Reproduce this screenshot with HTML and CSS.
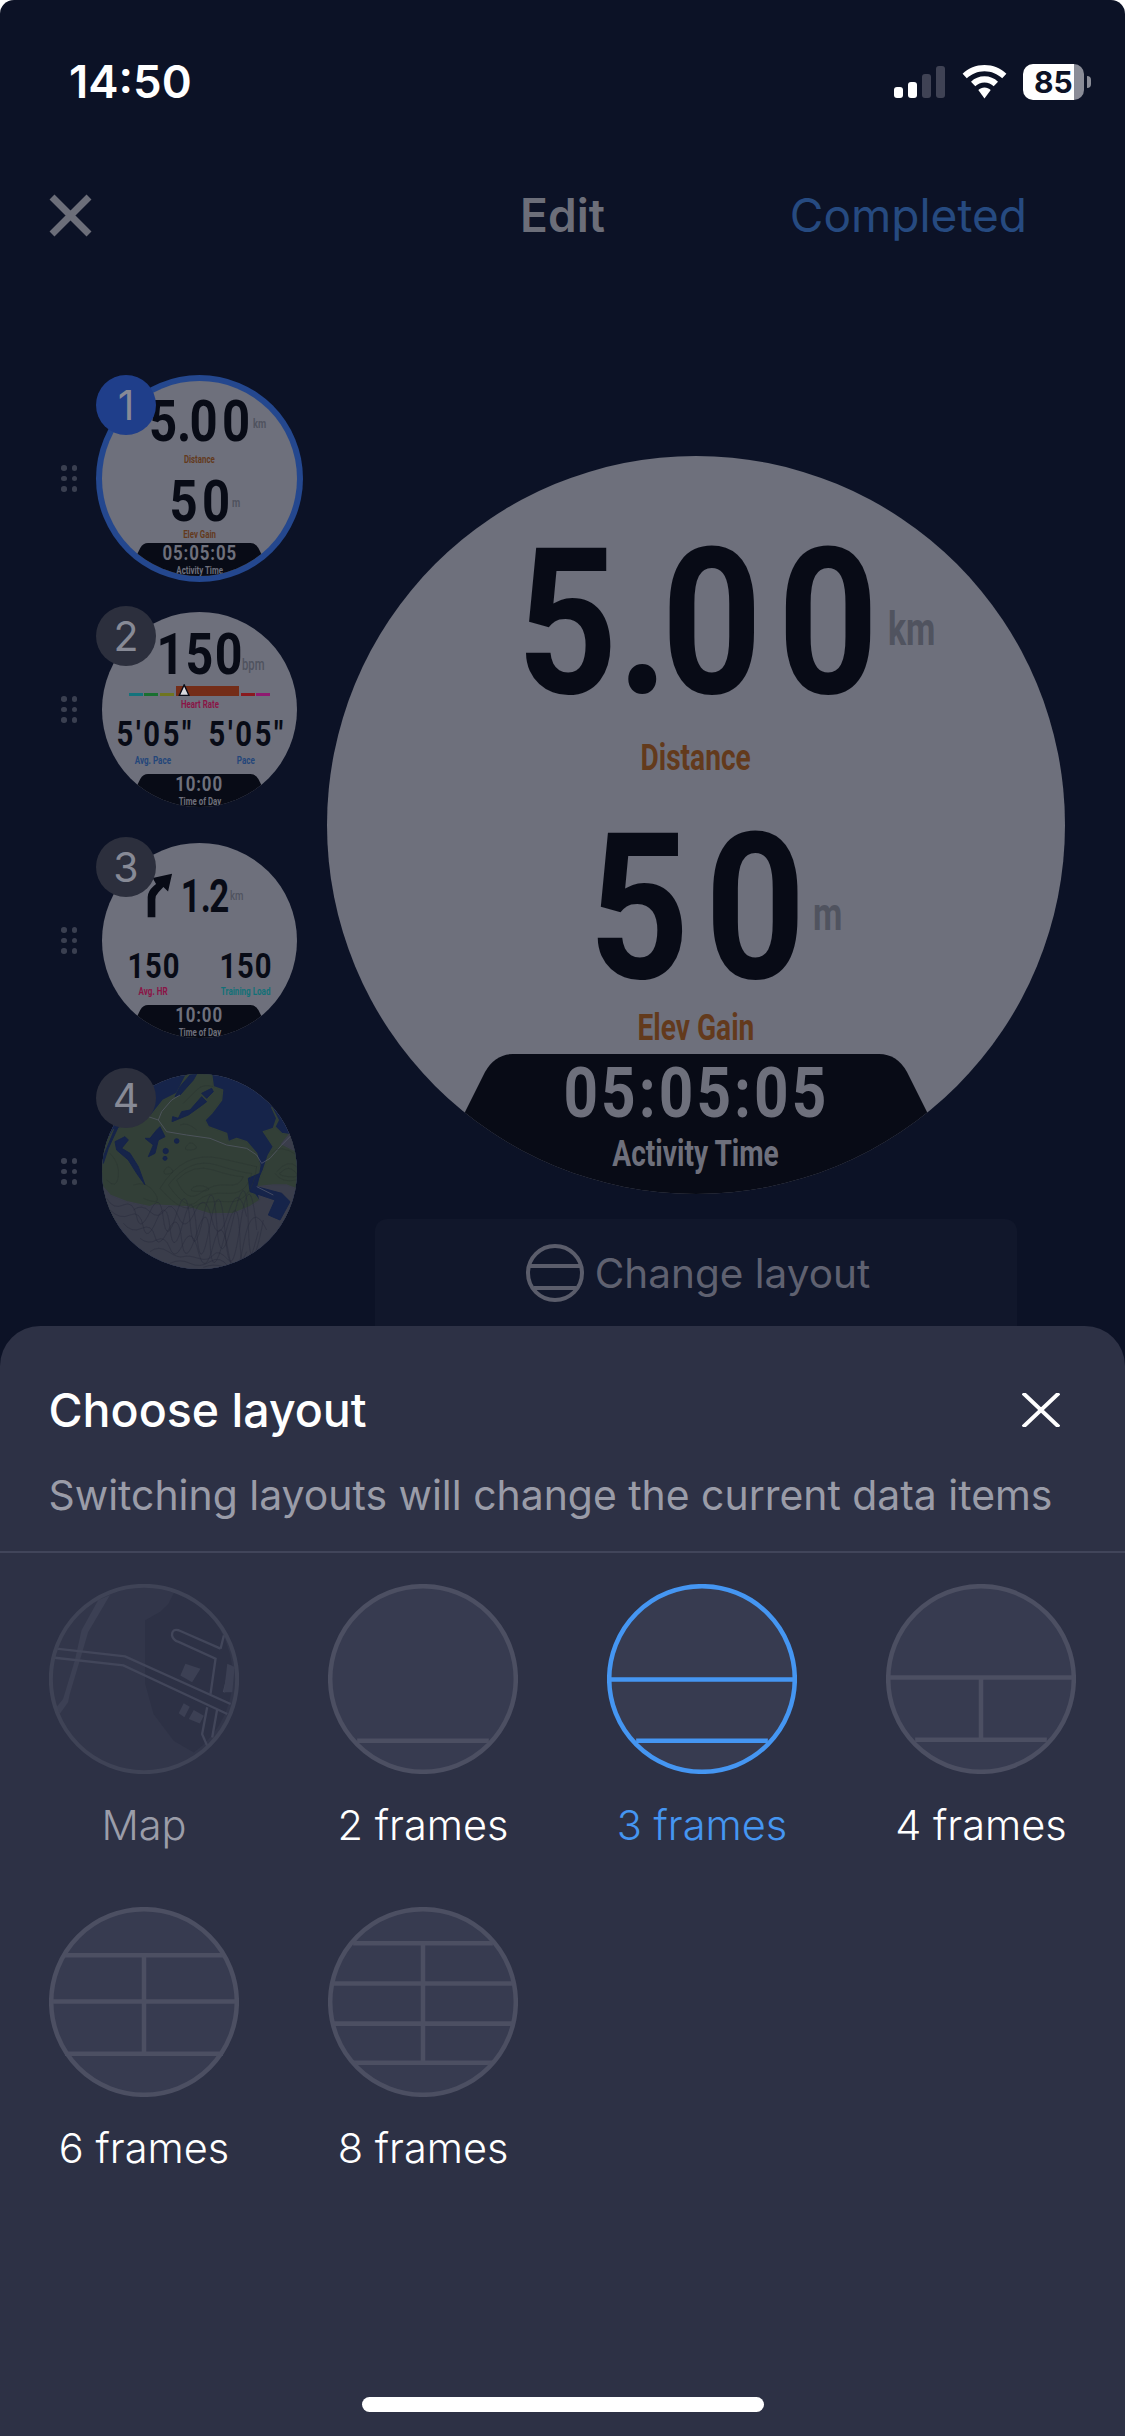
FILE: index.html
```html
<!DOCTYPE html>
<html lang="en">
<head>
<meta charset="utf-8">
<title>Edit</title>
<link rel="stylesheet" href="styles.css">
</head>
<body>
<div class="screen">
  <div class="status">
    <span class="time">14:50</span>
    <div class="status-icons">
      <div class="signal"><i class="on s1"></i><i class="on s2"></i><i class="s3"></i><i class="s4"></i></div>
      <svg class="wifi" viewBox="0 0 45 34"><path d="M22.5 0C14 0 6.400 3.300 0.600 8.700L4.800 13.300C9.400 9 15.700 6.200 22.500 6.200S35.600 9 40.200 13.300L44.400 8.700C38.600 3.300 31 0 22.500 0Z" fill="#fff"/><path d="M22.500 11.300C17.300 11.300 12.600 13.300 9 16.700L13.300 21.300C15.700 19 18.900 17.600 22.500 17.600S29.300 19 31.700 21.300L36 16.700C32.400 13.300 27.700 11.300 22.500 11.300Z" fill="#fff"/><path d="M22.500 22.600C20.100 22.600 18 23.500 16.300 25L22.500 33.500L28.700 25C27 23.500 24.900 22.600 22.500 22.600Z" fill="#fff"/></svg>
      <div class="battery"><div class="battery-body"><span>85</span></div><i class="battery-cap"></i></div>
    </div>
  </div>

  <header class="nav">
    <svg class="nav-close" viewBox="0 0 43 43"><path d="M3 3L40 40M40 3L3 40" stroke="#6c6e79" stroke-width="7" fill="none"/></svg>
    <span class="nav-title">Edit</span>
    <span class="nav-done">Completed</span>
  </header>

  <main class="editor">
    <ol class="pages">
      <li class="page">
        <div class="grip"><i></i><i></i><i></i><i></i><i></i><i></i></div>
        <div class="thumb">
          <span class="badge badge-active">1</span>
          <div class="dial dial-small dial-ring">
            <div class="face">
              <div class="value v-big w-500 mt-89"><span class="digits">5<span class="pt">.</span>00</span><span class="unit">km</span></div>
              <div class="label c-brown mt-43">Distance</div>
              <div class="value v-big w-50 mt-58"><span class="digits">50</span><span class="unit">m</span></div>
              <div class="label c-brown mt-28">Elev Gain</div>
              <div class="tab">
                <svg class="tab-shape" viewBox="0 0 738 140"><path d="M130 74L158 18Q168 0 186 0L552 0Q570 0 580 18L608 74L608 140L130 140Z"/></svg>
                <div class="tab-value">05:05:05</div>
                <div class="tab-label">Activity Time</div>
              </div>
            </div>
          </div>
        </div>
      </li>
      <li class="page">
        <div class="grip"><i></i><i></i><i></i><i></i><i></i><i></i></div>
        <div class="thumb">
          <span class="badge">2</span>
          <div class="dial dial-small">
            <div class="face">
              <div class="value v-hr w-150"><span class="digits tight">150</span><span class="unit unit-bpm">bpm</span></div>
              <div class="zones">
                <i class="z z1"></i><i class="z z2"></i><i class="z z3"></i>
                <i class="z z4"><svg class="pointer" viewBox="0 0 14 14"><path d="M7 1L12.500 13L1.500 13Z" fill="#d8d9de" stroke="#080b16" stroke-width="1.500"/></svg></i>
                <i class="z z5"></i><i class="z z6"></i>
              </div>
              <div class="label label-hr c-rose">Heart Rate</div>
              <div class="pair pair-pace">
                <div class="cell"><div class="value v-mid"><span class="digits">5'05"</span></div><div class="label label-s c-blue">Avg. Pace</div></div>
                <div class="cell"><div class="value v-mid"><span class="digits">5'05"</span></div><div class="label label-s c-blue">Pace</div></div>
              </div>
              <div class="tab">
                <svg class="tab-shape" viewBox="0 0 738 140"><path d="M130 74L158 18Q168 0 186 0L552 0Q570 0 580 18L608 74L608 140L130 140Z"/></svg>
                <div class="tab-value">10:00</div>
                <div class="tab-label">Time of Day</div>
              </div>
            </div>
          </div>
        </div>
      </li>
      <li class="page">
        <div class="grip"><i></i><i></i><i></i><i></i><i></i><i></i></div>
        <div class="thumb">
          <span class="badge">3</span>
          <div class="dial dial-small">
            <div class="face">
              <div class="nav-row">
                <svg class="turn" viewBox="325 213 77 134"><path d="M327 345L327 285Q327 268 345 252L352 246L342 228L400 215L388 268L374 255L360 270Q350 280 350 292L350 345Z" fill="#080b16"/></svg>
                <div class="value v-nav w-12"><span class="digits tight">1<span class="pt">.</span>2</span><span class="unit unit-nav">km</span></div>
              </div>
              <div class="pair pair-load">
                <div class="cell"><div class="value v-mid"><span class="digits tight">150</span></div><div class="label label-s c-rose">Avg. HR</div></div>
                <div class="cell"><div class="value v-mid"><span class="digits tight">150</span></div><div class="label label-s c-teal">Training Load</div></div>
              </div>
              <div class="tab">
                <svg class="tab-shape" viewBox="0 0 738 140"><path d="M130 74L158 18Q168 0 186 0L552 0Q570 0 580 18L608 74L608 140L130 140Z"/></svg>
                <div class="tab-value">10:00</div>
                <div class="tab-label">Time of Day</div>
              </div>
            </div>
          </div>
        </div>
      </li>
      <li class="page">
        <div class="grip"><i></i><i></i><i></i><i></i><i></i><i></i></div>
        <div class="thumb">
          <span class="badge">4</span>
          <div class="dial dial-small dial-map">
            <svg class="terrain" viewBox="6 12 585 585">
              <rect x="0" y="0" width="600" height="600" fill="#16244a"/>
              <path class="land" d="M0 450L0 250L40 180L70 170L150 140L190 90L230 70L260 12L335 12L340 50L368 60L365 90L335 130L315 150L325 170L380 190L385 215L410 205L440 215L470 250L480 285L475 315L445 340L465 375L480 395L440 450Z"/>
              <path class="land" d="M490 185L520 175L530 145L515 112L535 150L525 170L545 190L575 195L595 220L600 350L560 370L470 345L490 300L505 255L520 230Z"/>
              <path class="rock" d="M0 340L30 375L80 395L150 410L160 405L260 410L330 432L400 430L450 410L480 390L470 350L520 345L560 345L600 360L600 600L0 600Z"/>
              <path class="rock" d="M545 222L570 190L600 225L580 240Z"/>
              <path class="water" d="M445 325L480 310L470 350L545 370L570 395L540 450L505 435L525 390L450 365Z"/>
              <path class="water" d="M270 15L240 50L225 80L240 75L280 30L290 12ZM335 55L305 70L320 85L340 65ZM305 80L270 120L245 125L235 145L218 140L216 155L265 135L300 110L320 95ZM45 215L75 200L85 210L65 235L90 250L115 290L135 345L110 310L85 270L50 240ZM10 260L45 175L55 170L25 235L10 280ZM170 180L150 205L135 205L160 225L145 260L165 250L175 210L195 200L180 170Z"/>
              <circle class="water" cx="230" cy="213" r="7"/><circle class="water" cx="197" cy="243" r="8"/><circle class="water" cx="195" cy="265" r="6"/>
              <path class="road" d="M145 140L175 150L185 125L215 90L240 75M175 150L200 185L260 195L330 205L380 225L440 235L470 255L485 280L510 265L545 225L575 195M470 350L520 375"/>
              <g class="contour-land">
                <path d="M230 330Q280 280 340 300T430 320Q420 350 380 345T300 370T230 330Z"/>
                <path d="M205 345Q270 260 350 285T455 310Q440 375 380 370T290 395T205 345Z"/>
                <path d="M180 355Q250 240 360 265T470 290Q455 400 385 395T280 410T180 355Z"/>
                <path d="M280 352Q300 342 320 352T300 364T280 352Z"/>
                <path d="M545 305Q565 285 585 305T565 320T545 305ZM530 305Q565 265 590 290M525 310Q545 340 590 330M515 250Q540 220 590 255"/>
                <path d="M195 297Q205 285 215 297T205 312T195 297ZM262 225Q272 212 285 225T272 240T262 225ZM100 345Q140 330 165 370T130 385M30 250Q60 280 55 320T20 330M240 165Q262 155 290 180M340 50Q310 40 290 60T250 100"/>
              </g>
              <g class="contour-rock">
                <path d="M20 385Q40 420 70 405T110 440T150 425T190 445T230 430T270 455T310 440T350 460T400 445T445 465T490 450"/>
                <path d="M30 420Q60 450 90 435T130 470T170 450T210 475T250 455T290 485T330 465T375 485T420 470T470 480"/>
                <path d="M70 460Q95 490 125 475T165 500T205 480T245 510T290 490T330 515T375 495T420 510T475 485"/>
                <path d="M120 505Q145 525 170 510T210 535T250 520T295 545T340 525T385 545T430 525T500 480"/>
                <path d="M150 545Q175 525 205 545T250 560T295 565T340 555T385 570T440 545"/>
                <path d="M210 580Q240 565 270 580T330 575T385 590T430 570"/>
                <path d="M310 592Q340 580 370 590T420 585"/>
                <path d="M100 420Q125 400 150 425T195 420T235 440T285 425T335 445T385 430T440 440"/>
                <path d="M60 500Q90 530 120 545T170 575"/>
              </g>
            </svg>
          </div>
        </div>
      </li>
    </ol>

    <section class="preview">
      <div class="dial dial-large">
        <div class="face">
          <div class="value v-big w-500 mt-89"><span class="digits">5<span class="pt">.</span>00</span><span class="unit">km</span></div>
          <div class="label c-brown mt-43">Distance</div>
          <div class="value v-big w-50 mt-58"><span class="digits">50</span><span class="unit">m</span></div>
          <div class="label c-brown mt-28">Elev Gain</div>
          <div class="tab">
            <svg class="tab-shape" viewBox="0 0 738 140"><path d="M130 74L158 18Q168 0 186 0L552 0Q570 0 580 18L608 74L608 140L130 140Z"/></svg>
            <div class="tab-value">05:05:05</div>
            <div class="tab-label">Activity Time</div>
          </div>
        </div>
      </div>
      <button class="change">
        <svg class="change-icon" viewBox="0 0 58 58"><circle cx="29" cy="29" r="27" fill="none" stroke="#5b5d6b" stroke-width="4"/><path d="M3 22L55 22M8 44L50 44" stroke="#5b5d6b" stroke-width="4" fill="none"/></svg>
        <span>Change layout</span>
      </button>
    </section>
  </main>

  <section class="sheet">
    <div class="sheet-head">
      <div class="sheet-title-row">
        <h2 class="sheet-title">Choose layout</h2>
        <svg class="sheet-close" viewBox="0 0 38 34"><path d="M1 0L37 34M37 0L1 34" stroke="#fff" stroke-width="4" fill="none"/></svg>
      </div>
      <p class="sheet-sub">Switching layouts will change the current data items</p>
    </div>
    <div class="layouts">
      <div class="layout">
        <svg class="frame" viewBox="58 42 567 567">
          <circle cx="341.500" cy="325.500" r="278" fill="#32364a"/>
          <path d="M430 70L415 100L390 125L345 150L345 340L370 430L430 510L490 545A278 278 0 0 0 430 60Z" fill="#2d3145"/>
          <path d="M205 90L240 75L190 160L175 185L150 270L120 370L115 395L90 430L80 410L100 385L135 270L155 180Z" fill="#3c4054"/>
          <g fill="none" stroke="#42465a" stroke-width="7">
            <path d="M80 235L285 258L600 400M75 262L280 285L590 430"/>
            <path d="M570 235L445 180Q425 175 425 195Q428 210 445 215L555 265L540 370M570 235L580 195"/>
            <path d="M530 410L515 490L530 525M560 415L545 500M580 365L600 285"/>
          </g>
          <path d="M465 280L510 295L485 335L450 315ZM460 398L478 408L462 440L445 428ZM490 418L520 435L508 458L475 445ZM590 280L612 290L605 365L580 365Z" fill="#3c4054"/>
          <circle cx="341.500" cy="325.500" r="278" fill="none" stroke="#3f4356" stroke-width="12"/>
        </svg>
        <span class="layout-name muted">Map</span>
      </div>
      <div class="layout">
        <svg class="frame" viewBox="0 0 189 189"><circle cx="94.500" cy="94.500" r="92.300" fill="#373b50"/><path d="M29 156L160 156" class="ln"/><circle cx="94.500" cy="94.500" r="92.300" class="ln"/></svg>
        <span class="layout-name">2 frames</span>
      </div>
      <div class="layout">
        <svg class="frame frame-on" viewBox="0 0 189 189"><circle cx="94.500" cy="94.500" r="92.300" fill="#373b50"/><path d="M2 95L187 95M29 156L160 156" class="ln"/><circle cx="94.500" cy="94.500" r="92.300" class="ln"/></svg>
        <span class="layout-name active">3 frames</span>
      </div>
      <div class="layout">
        <svg class="frame" viewBox="0 0 189 189"><circle cx="94.500" cy="94.500" r="92.300" fill="#373b50"/><path d="M2 93L187 93M29 155L160 155M94.500 93L94.500 155" class="ln"/><circle cx="94.500" cy="94.500" r="92.300" class="ln"/></svg>
        <span class="layout-name">4 frames</span>
      </div>
      <div class="layout">
        <svg class="frame" viewBox="0 0 189 189"><circle cx="94.500" cy="94.500" r="92.300" fill="#373b50"/><path d="M14 48L175 48M2 94L187 94M16 146L173 146M94.500 48L94.500 146" class="ln"/><circle cx="94.500" cy="94.500" r="92.300" class="ln"/></svg>
        <span class="layout-name">6 frames</span>
      </div>
      <div class="layout">
        <svg class="frame" viewBox="0 0 189 189"><circle cx="94.500" cy="94.500" r="92.300" fill="#373b50"/><path d="M25 36L164 36M5 76L184 76M5 116L184 116M25 155L164 155M94.500 36L94.500 155" class="ln"/><circle cx="94.500" cy="94.500" r="92.300" class="ln"/></svg>
        <span class="layout-name">8 frames</span>
      </div>
    </div>
    <div class="home-bar"></div>
  </section>
</div>
</body>
</html>
```

FILE: styles.css
```css
* { box-sizing: border-box; }
html, body { margin: 0; padding: 0; }
body { width: 1125px; height: 2436px; overflow: hidden; background: #fff; font-family: Inter, "Noto Sans", sans-serif; }

.screen { position: relative; width: 1125px; height: 2436px; overflow: hidden; border-radius: 14px 14px 0 0; background: #0c1226; padding-top: 50px; }

/* status bar */
.status { display: flex; justify-content: space-between; align-items: center; height: 64px; padding: 0 34px 0 69px; }
.time { color: #fff; font-size: 45.500px; font-weight: 600; line-height: 64px; }
.status-icons { display: flex; align-items: center; gap: 16px; }
.signal { display: flex; align-items: flex-end; gap: 5.300px; height: 32px; margin-right: 1px; }
.signal i { display: block; width: 8.700px; border-radius: 3px; background: #3f4254; }
.signal i.on { background: #fff; }
.s1 { height: 11px; }
.s2 { height: 16px; }
.s3 { height: 24px; }
.s4 { height: 32px; }
.wifi { width: 45px; height: 34px; }
.battery { display: flex; align-items: center; gap: 3px; }
.battery-body { width: 61px; height: 36px; border-radius: 10px; background: linear-gradient(90deg, #fff 0 83.500%, #8a8c97 83.500%); display: flex; align-items: center; padding-left: 11px; }
.battery-body span { color: #0c1226; font-size: 30px; font-weight: 700; line-height: 36px; }
.battery-cap { display: block; width: 4px; height: 12px; border-radius: 0 6px 6px 0; background: #8a8c97; }

/* navigation */
.nav { display: grid; grid-template-columns: 1fr auto 1fr; align-items: center; height: 60px; margin-top: 71px; padding: 0 98px; }
.nav-close { width: 43px; height: 43px; margin-left: -49px; }
.nav-title { color: #6c6e79; font-size: 46px; font-weight: 600; line-height: 60px; }
.nav-done { justify-self: end; color: #264a80; font-size: 46px; line-height: 60px; }

/* editor */
.editor { display: flex; margin-top: 130px; padding-left: 61px; }
.pages { list-style: none; margin: 0; padding: 0; display: flex; flex-direction: column; gap: 24px; }
.page { display: flex; align-items: center; gap: 19px; height: 207px; }
.grip { display: grid; grid-template-columns: repeat(2, 5.500px); gap: 5px; }
.grip i { display: block; width: 5.500px; height: 5.500px; border-radius: 50%; background: #3a3f50; }
.thumb { position: relative; display: flex; align-items: center; justify-content: center; width: 207px; height: 207px; }
.badge { position: absolute; left: 0; top: 0; z-index: 2; width: 60px; height: 60px; border-radius: 50%; background: #2c2f3d; color: #878a96; font-size: 41px; line-height: 60px; text-align: center; }
.badge-active { background: #1f3e8a; }

/* dial */
.dial { --u: 1px; flex: none; display: flex; justify-content: center; align-items: center; overflow: hidden; border-radius: 50%; background: #6e707c; font-family: Roboto, "Liberation Sans", sans-serif; }
.dial-small { --u: .28px; width: 195px; height: 195px; }
.dial-large { width: 738px; height: 738px; }
.dial-ring { box-shadow: 0 0 0 6px #24478e; }
.dial-map { display: block; }
.terrain { display: block; width: 100%; height: 100%; }
.land { fill: #323f37; stroke: #323f37; stroke-width: 4; stroke-linejoin: round; }
.rock { fill: #3a3d4b; stroke: #3a3d4b; stroke-width: 4; stroke-linejoin: round; }
.water { fill: #16244a; stroke: #16244a; stroke-width: 3; stroke-linejoin: round; }
.road { fill: none; stroke: #5a5e6e; stroke-width: 2; stroke-linejoin: round; }
.contour-land path { fill: none; stroke: #29322f; stroke-width: 1.200; }
.contour-rock path { fill: none; stroke: #25283a; stroke-width: 1.200; }
.face { position: relative; flex: none; display: flex; flex-direction: column; align-items: center; width: calc(738 * var(--u)); height: calc(738 * var(--u)); }
.mt-89 { margin-top: calc(89 * var(--u)); }
.mt-43 { margin-top: calc(43 * var(--u)); }
.mt-58 { margin-top: calc(58 * var(--u)); }
.mt-28 { margin-top: calc(28 * var(--u)); }
.value { position: relative; display: flex; justify-content: center; color: #080b16; font-weight: 700; white-space: nowrap; }
.digits { flex: none; display: block; letter-spacing: .09em; margin-right: -.09em; transform: scaleX(.855); }
.digits.tight { letter-spacing: .03em; margin-right: -.03em; }
.pt { margin-left: -.09em; letter-spacing: -.04em; }
.tight .pt { margin-left: -.03em; letter-spacing: -.05em; }
.w-500 { width: calc(346 * var(--u)); }
.w-50 { width: calc(196 * var(--u)); }
.w-150 { width: calc(275 * var(--u)); }
.w-12 { width: calc(154 * var(--u)); }
.v-big { font-size: calc(205 * var(--u)); line-height: calc(156 * var(--u)); }
.v-hr { margin-top: calc(100 * var(--u)); font-size: calc(202 * var(--u)); line-height: calc(154 * var(--u)); }
.v-mid { font-size: calc(122 * var(--u)); line-height: calc(93 * var(--u)); }
.v-nav { font-size: calc(164 * var(--u)); line-height: calc(125 * var(--u)); margin-bottom: calc(13 * var(--u)); }
.v-nav .digits { transform: scaleX(.76); }
.unit { position: absolute; left: 100%; bottom: calc(55 * var(--u)); margin-left: calc(19 * var(--u)); color: #50535f; font-size: calc(47 * var(--u)); line-height: calc(35 * var(--u)); transform: scaleX(.72); transform-origin: left center; }
.unit-bpm { bottom: calc(18 * var(--u)); margin-left: calc(14 * var(--u)); font-size: calc(56 * var(--u)); line-height: calc(46 * var(--u)); font-weight: 500; }
.unit-nav { bottom: calc(46 * var(--u)); margin-left: calc(14 * var(--u)); font-size: calc(48 * var(--u)); font-weight: 500; }
.label { font-size: calc(37 * var(--u)); font-weight: 700; line-height: calc(28 * var(--u)); white-space: nowrap; transform: scaleX(.76); }
.label-hr { margin-top: calc(17 * var(--u)); }
.label-s { margin-top: calc(35 * var(--u)); font-size: calc(38 * var(--u)); }
.c-brown { color: #633a1c; }
.c-rose { color: #8a1446; }
.c-blue { color: #24467a; }
.c-teal { color: #127078; }

.zones { display: flex; align-items: flex-end; gap: calc(7 * var(--u)); height: calc(36 * var(--u)); margin-top: calc(32 * var(--u)); }
.z { position: relative; display: block; width: calc(50 * var(--u)); height: calc(11 * var(--u)); }
.z1 { background: #14737c; }
.z2 { background: #1a7030; }
.z3 { background: #6f7520; }
.z4 { width: calc(222 * var(--u)); height: calc(36 * var(--u)); background: #742d18; }
.z5 { background: #8a1a1e; }
.z6 { background: #8f1a70; }
.pointer { position: absolute; left: calc(7 * var(--u)); bottom: 0; width: calc(44 * var(--u)); height: calc(44 * var(--u)); }

.pair { display: flex; width: calc(660 * var(--u)); }
.pair-pace { margin-top: calc(44 * var(--u)); }
.pair-load { margin-top: calc(125 * var(--u)); }
.cell { flex: 1 1 0; display: flex; flex-direction: column; align-items: center; }

.nav-row { display: flex; align-items: flex-end; gap: calc(36 * var(--u)); height: calc(160 * var(--u)); padding-right: calc(90 * var(--u)); margin-top: calc(127 * var(--u)); }
.turn { flex: none; width: calc(92 * var(--u)); height: calc(160 * var(--u)); }

.tab { position: absolute; left: 0; right: 0; top: calc(598 * var(--u)); bottom: 0; display: flex; flex-direction: column; align-items: center; }
.tab-shape { position: absolute; left: 0; top: 0; width: 100%; height: calc(140 * var(--u)); fill: #080b16; }
.tab-value { position: relative; margin-top: calc(12 * var(--u)); color: #6e707c; font-size: calc(71 * var(--u)); font-weight: 700; letter-spacing: .05em; line-height: calc(54 * var(--u)); transform: scaleX(.85); }
.tab-label { position: relative; margin-top: calc(20 * var(--u)); color: #6e707c; font-size: calc(37 * var(--u)); font-weight: 700; line-height: calc(28 * var(--u)); transform: scaleX(.76); }

/* preview */
.preview { display: flex; flex-direction: column; align-items: center; margin: 81px 0 0 24px; }
.change { display: flex; align-items: center; justify-content: center; gap: 11px; width: 642px; height: 120px; margin-top: 25px; padding: 0 0 12px 4px; border: 0; border-radius: 12px; background: #11172b; color: #5f6170; font-family: Inter, sans-serif; font-size: 40.500px; }
.change-icon { width: 58px; height: 58px; }

/* sheet */
.sheet { position: absolute; left: 0; right: 0; bottom: 0; height: 1110px; border-radius: 40px 40px 0 0; background: #2d3145; }
.sheet-head { height: 227px; padding: 55px 65px 0 48.500px; border-bottom: 2px solid #41455a; }
.sheet-title-row { display: flex; justify-content: space-between; align-items: center; height: 58px; }
.sheet-title { margin: 0; color: #fff; font-size: 46.500px; font-weight: 500; line-height: 58px; }
.sheet-close { width: 38px; height: 34px; }
.sheet-sub { margin: 30px 0 0; color: #9a9ca8; font-size: 40.900px; line-height: 52px; white-space: nowrap; }
.layouts { display: grid; grid-template-columns: repeat(4, 190px); gap: 0 89px; padding: 31px 0 0 49px; }
.layout { display: flex; flex-direction: column; align-items: center; height: 323px; }
.frame { width: 190px; height: 190px; flex: none; }
.ln { fill: none; stroke: #4c4f62; stroke-width: 4.500; }
.frame-on .ln { stroke: #4596f2; }
.layout-name { margin-top: 25px; color: #fff; font-size: 41.500px; font-weight: 300; line-height: 52px; white-space: nowrap; }
.layout-name.muted { color: #9b9da9; }
.layout-name.active { color: #4596f2; }
.home-bar { position: absolute; left: 362px; bottom: 24px; width: 402px; height: 15px; border-radius: 8px; background: #fff; }
```
